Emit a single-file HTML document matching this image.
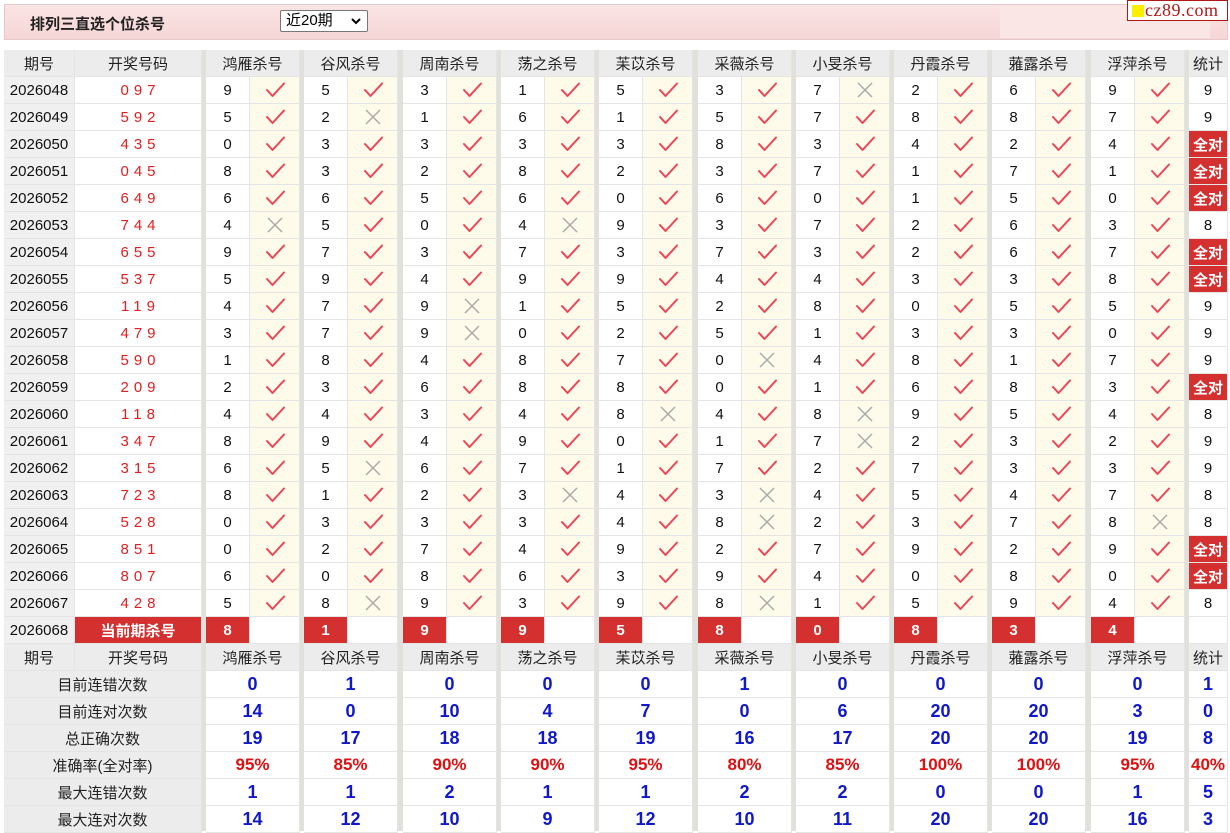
<!DOCTYPE html>
<html><head><meta charset="utf-8"><style>
body{margin:0;width:1230px;height:831px;background:#fff;font-family:"Liberation Sans","Noto Sans CJK SC",sans-serif;position:relative;overflow:hidden}
.c{position:absolute;box-sizing:border-box;border-right:1px solid #e4e4e4;border-bottom:1px solid #e4e4e4;display:flex;align-items:center;justify-content:center;font-size:15px;color:#111}
.sep{position:absolute;background:#e2e0da}
.h{background:#ececec;color:#222}
.p{background:#f0f0f0}
.ck{background:#fffbea}
.r{color:#e02020;letter-spacing:5px;padding-left:5px}
.red{background:#d43030;color:#fff;font-weight:bold}
.b{color:#1018c8;font-weight:bold;font-size:18px}
.rr{color:#e01010;font-weight:bold;font-size:17px}
</style></head><body>
<div style="position:absolute;left:4px;top:4px;width:1224px;height:36px;background:linear-gradient(#fbe4e4,#f6d6d6);border:1px solid #e6c8c8;box-sizing:border-box"></div>
<div style="position:absolute;left:1000px;top:6px;width:210px;height:32px;background:#fbe6e6"></div>
<div style="position:absolute;left:30px;top:13px;font-size:15px;font-weight:bold;color:#222">排列三直选个位杀号</div>
<div style="position:absolute;left:280px;top:10px;width:88px;height:22px;border:1px solid #777;border-radius:2px;background:#fff;box-sizing:border-box;font-size:15px;padding-left:5px;line-height:20px">近20期<svg style="position:absolute;right:6px;top:6px" width="10" height="8" viewBox="0 0 10 8"><path d="M1 2L5 6L9 2" fill="none" stroke="#000" stroke-width="2"/></svg></div>
<div style="position:absolute;left:1127px;top:0;width:101px;height:21px;border:1px solid #b01818;box-sizing:border-box;background:#fff;font-family:'Liberation Serif',serif;font-size:18px;color:#b01818;line-height:19px;padding-left:17px;letter-spacing:0.5px">cz89.com<span style="position:absolute;left:4px;top:4px;width:12px;height:12px;background:#ffee00"></span></div>
<div id="g"></div>
<script>
var rows=[
["2026048","097","9a5a3a1a5a3a7x2a6a9a","9"],
["2026049","592","5a2x1a6a1a5a7a8a8a7a","9"],
["2026050","435","0a3a3a3a3a8a3a4a2a4a","全对"],
["2026051","045","8a3a2a8a2a3a7a1a7a1a","全对"],
["2026052","649","6a6a5a6a0a6a0a1a5a0a","全对"],
["2026053","744","4x5a0a4x9a3a7a2a6a3a","8"],
["2026054","655","9a7a3a7a3a7a3a2a6a7a","全对"],
["2026055","537","5a9a4a9a9a4a4a3a3a8a","全对"],
["2026056","119","4a7a9x1a5a2a8a0a5a5a","9"],
["2026057","479","3a7a9x0a2a5a1a3a3a0a","9"],
["2026058","590","1a8a4a8a7a0x4a8a1a7a","9"],
["2026059","209","2a3a6a8a8a0a1a6a8a3a","全对"],
["2026060","118","4a4a3a4a8x4a8x9a5a4a","8"],
["2026061","347","8a9a4a9a0a1a7x2a3a2a","9"],
["2026062","315","6a5x6a7a1a7a2a7a3a3a","9"],
["2026063","723","8a1a2a3x4a3x4a5a4a7a","8"],
["2026064","528","0a3a3a3a4a8x2a3a7a8x","8"],
["2026065","851","0a2a7a4a9a2a7a9a2a9a","全对"],
["2026066","807","6a0a8a6a3a9a4a0a8a0a","全对"],
["2026067","428","5a8x9a3a9a8x1a5a9a4a","8"]];
var names=["鸿雁杀号","谷风杀号","周南杀号","荡之杀号","苿苡杀号","采薇杀号","小旻杀号","丹霞杀号","蕥露杀号","浮萍杀号"];
var cur="8199580834";
var stats=[["目前连错次数","0 1 0 0 0 1 0 0 0 0 1","b"],["目前连对次数","14 0 10 4 7 0 6 20 20 3 0","b"],["总正确次数","19 17 18 18 19 16 17 20 20 19 8","b"],["准确率(全对率)","95% 85% 90% 90% 95% 80% 85% 100% 100% 95% 40%","rr"],["最大连错次数","1 1 2 1 1 2 2 0 0 1 5","b"],["最大连对次数","14 12 10 9 12 10 11 20 20 16 3","b"]];
var CK='<svg width="22" height="18" viewBox="0 0 22 18"><path d="M3 9 L8.5 15 L20 2.5" fill="none" stroke="#ee4455" stroke-width="2" stroke-linecap="round" stroke-linejoin="round"/></svg>';
var XX='<svg width="18" height="18" viewBox="0 0 18 18"><path d="M2 2L16 16M16 2L2 16" stroke="#aaa" stroke-width="1.5"/></svg>';
var h='';
function c(x,y,w,hh,cls,t){h+='<div class="c '+cls+'" style="left:'+x+'px;top:'+y+'px;width:'+w+'px;height:'+hh+'px">'+t+'</div>';}
function gx(i){return Math.round(206+i*98.3);}
function header(y){c(4,y,71,27,'h','期号');c(75,y,127,27,'h','开奖号码');for(var i=0;i<10;i++)c(gx(i),y,94,27,'h',names[i]);c(1189,y,39,27,'h','统计');}
header(50);
for(var r=0;r<20;r++){var y=77+27*r,d=rows[r];c(4,y,71,27,'p',d[0]);c(75,y,127,27,'r',d[1]);
for(var i=0;i<10;i++){c(gx(i),y,44,27,'',d[2][2*i]);c(gx(i)+44,y,50,27,'ck',d[2][2*i+1]=='a'?CK:XX);}
c(1189,y,39,27,d[3]=='全对'?'red':'',d[3]);}
var y=617;c(4,y,71,27,'p','2026068');c(75,y,127,27,'red','当前期杀号');
for(var i=0;i<10;i++){c(gx(i),y,44,27,'red',cur[i]);c(gx(i)+44,y,50,27,'','');}c(1189,y,39,27,'','');
header(644);
for(var k=0;k<6;k++){var y=671+27*k,s=stats[k],v=s[1].split(' ');c(4,y,198,27,'h',s[0]);for(var i=0;i<10;i++)c(gx(i),y,94,27,s[2],v[i]);c(1189,y,39,27,s[2],v[10]);}
h+='<div class="sep" style="left:202px;top:50px;width:4px;height:781px"></div>';
for(var i=0;i<10;i++){var x=gx(i)+94,w=(i<9?gx(i+1):1189)-x;h+='<div class="sep" style="left:'+x+'px;top:50px;width:'+w+'px;height:781px"></div>';}
document.getElementById('g').innerHTML=h;
</script>
</body></html>
